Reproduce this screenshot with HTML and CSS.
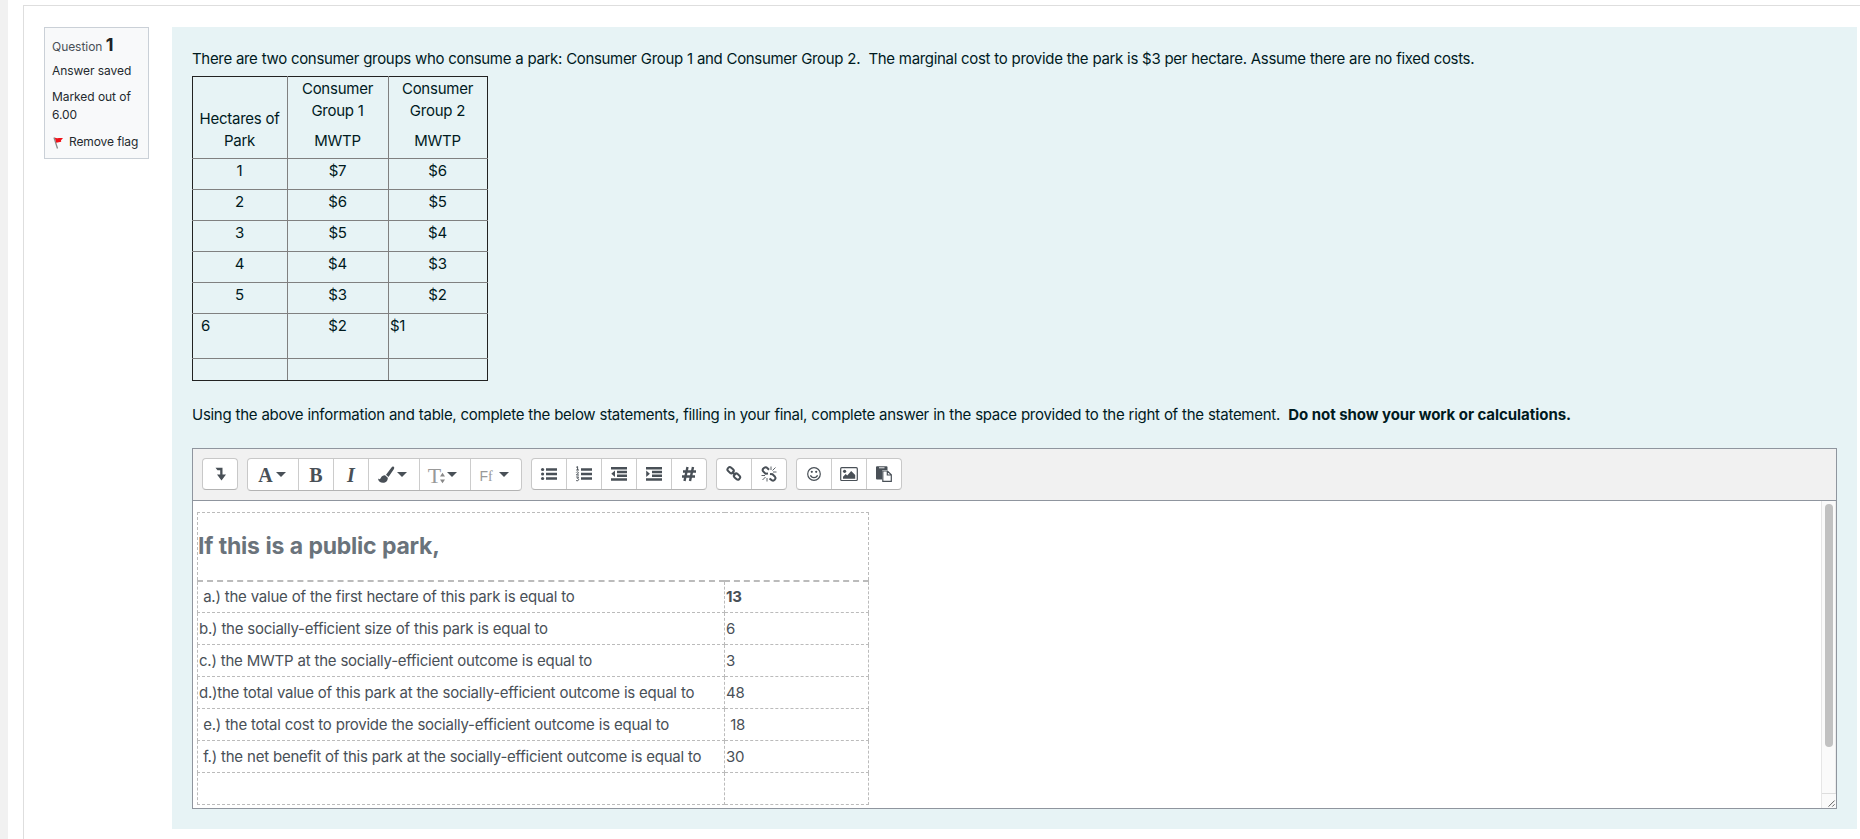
FILE: index.html
```html
<!DOCTYPE html>
<html lang="en">
<head>
<meta charset="utf-8">
<title>Quiz question 1</title>
<link rel="stylesheet" href="styles.css">
</head>
<body>
<div class="page">
  <main class="region">
    <aside class="info">
      <h3 class="qno">Question <b>1</b></h3>
      <div class="state">Answer saved</div>
      <div class="grade">Marked out of 6.00</div>
      <div class="flag"><svg width="11" height="12" viewBox="0 0 11 12"><path d="M1 .5L4.500 11.500" stroke="#888" stroke-width="1.300"/><path d="M1.700.5C4 2 7 .3 10 1.200L8 3.200 8.200 4.800 3.300 5.800Z" fill="#f01018"/></svg><span>Remove flag</span></div>
    </aside>
    <section class="formulation">
      <p class="intro">There are two consumer groups who consume a park: Consumer Group 1 and Consumer Group 2.&nbsp; The marginal cost to provide the park is $3 per hectare. Assume there are no fixed costs.</p>
      <table class="mwtp">
        <colgroup><col class="c1"><col class="c2"><col class="c3"></colgroup>
        <tr class="head"><td>Hectares of Park</td><td><p>Consumer Group 1</p><p>MWTP</p></td><td><p>Consumer Group 2</p><p>MWTP</p></td></tr>
        <tr><td>1</td><td>$7</td><td>$6</td></tr>
        <tr><td>2</td><td>$6</td><td>$5</td></tr>
        <tr><td>3</td><td>$5</td><td>$4</td></tr>
        <tr><td>4</td><td>$4</td><td>$3</td></tr>
        <tr><td>5</td><td>$3</td><td>$2</td></tr>
        <tr class="six"><td>6</td><td>$2</td><td>$1</td></tr>
        <tr class="blank"><td></td><td></td><td></td></tr>
      </table>
      <p class="task"><span class="lead">Using the above information and table, complete the below statements, filling in your final, complete answer in the space provided to the right of the statement.&nbsp; </span><b>Do not show your work or calculations.</b></p>

      <div class="editor">
        <div class="toolbar">
          <div class="group"><button><svg class="ic" viewBox="0 0 20 20"><path d="M5.500 3.700H12.500V10.500H16L11.500 16.500 7 10.500H10.200V6.200H7.500Z"/></svg></button></div>
          <div class="group tall">
            <button class="wide"><span class="glyph">A</span><i class="caret"></i></button>
            <button><span class="glyph">B</span></button>
            <button><span class="glyph ital">I</span></button>
            <button class="wide"><svg class="ic brush" viewBox="0 0 18 18"><path d="M16.700.8c.8.5.6 1.600.1 2.400L11.500 11 9 8.700 14.500 1.400c.6-.7 1.400-1 2.200-.6ZM8.300 9.400l2.500 2.400c.2 3-2 5-4.800 5-2.700 0-4.600-1.300-5-4.300 1.500 1 2.200.8 2.800-.5.800-1.800 2.500-2.800 4.500-2.600Z"/></svg><i class="caret near"></i></button>
            <button class="wide"><span class="glyph size">T</span><svg class="updown" viewBox="0 0 5 12"><path d="M0 4.500L2.500.8 5 4.500ZM0 7.500H5L2.500 11.200Z"/></svg><i class="caret mid"></i></button>
            <button class="wide"><span class="family">F<em>f</em></span><i class="caret far"></i></button>
          </div>
          <div class="group">
            <button><svg class="ic" viewBox="0 0 20 20"><path d="M7 5.500H18M7 10H18M7 14.500H18" class="bar"/><circle cx="3.600" cy="5.500" r="1.600"/><circle cx="3.600" cy="10" r="1.600"/><circle cx="3.600" cy="14.500" r="1.600"/></svg></button>
            <button><svg class="ic" viewBox="0 0 20 20"><path d="M7 5.500H18M7 10H18M7 14.500H18" class="bar"/><path class="thin" d="M2.200 3.300L3.600 2.600V6M2.200 6H5M2.300 8.500C3 7.400 4.800 7.800 4.300 9L2.400 11H5M2.200 13H4.600L3.400 14.400C5.500 14.500 5 17.500 2.200 16.600"/></svg></button>
            <button><svg class="ic" viewBox="0 0 20 20"><path class="bar" d="M2 4.200H18M8 8H18M8 11.800H18M2 15.600H18"/><path d="M6 6.500V13L2.300 9.700Z"/></svg></button>
            <button><svg class="ic" viewBox="0 0 20 20"><path class="bar" d="M2 4.200H18M8 8H18M8 11.800H18M2 15.600H18"/><path d="M2.200 6.500V13L5.900 9.700Z"/></svg></button>
            <button><svg class="ic" viewBox="0 0 20 20"><path class="hash" d="M8.500 3L5.500 17M14 3L11 17M4 7.500H17M3 12.500H16"/></svg></button>
          </div>
          <div class="group">
            <button><svg class="ic" viewBox="0 0 20 20"><g class="link"><rect x="-3.300" y="-2.300" width="6.600" height="4.600" rx="2.100" transform="translate(6.600 6.200) rotate(42)"/><rect x="-3.300" y="-2.300" width="6.600" height="4.600" rx="2.100" transform="translate(13 12.600) rotate(42)"/><path d="M8 7.600L11.600 11.200"/></g></svg></button>
            <button><svg class="ic" viewBox="0 0 20 20"><g class="link"><path d="M10 5.800L8 3.800C6.500 2.200 2.500 5 4 7.200L6.500 9.800 9 9.500M10.500 14.500L13 16.400C15 17.500 17.500 14.500 16 12.800L13.500 10.300 11 10"/></g><path class="rays" d="M12 6V2.500M13.500 6.500L16.500 3.500M14 8H17.500M8 14V17.500M6.500 13L3.500 16M6 11.500H2.500"/></svg></button>
          </div>
          <div class="group">
            <button><svg class="ic" viewBox="0 0 20 20"><circle class="ring" cx="10" cy="10" r="6.300"/><circle cx="7.800" cy="7.800" r="1.100"/><circle cx="12.200" cy="7.800" r="1.100"/><path class="ring" d="M6.500 11.300C7.500 14.400 12.500 14.400 13.500 11.300"/></svg></button>
            <button><svg class="ic" viewBox="0 0 20 20"><rect class="ring" x="1.700" y="3.700" width="16.600" height="12.800" rx="1"/><circle cx="5.600" cy="7.300" r="1.600"/><path d="M4 14.800V12.800L6.700 10.100 8.200 11.500 12.200 7 16.200 11V14.800Z"/></svg></button>
            <button><svg class="ic" viewBox="0 0 20 20"><path d="M2 3.300Q2 2.300 3 2.300H12.500Q13.500 2.300 13.500 3.300V6H9.300Q8 6 8 7.300V15.500H3Q2 15.500 2 14.500Z"/><path d="M5 3.800H10.500" stroke="#fff" stroke-width=".9"/><path class="ring" fill="#fff" d="M8.800 7H13.500L17.300 10.800V17.300H8.800ZM13.300 7V11H17.300"/></svg></button>
          </div>
        </div>
        <div class="content">
          <div class="doc">
            <table class="answers">
              <colgroup><col class="stmt"><col class="val"></colgroup>
              <tr class="title"><td colspan="2"><h3>If this is a public park,</h3></td></tr>
              <tr><td>&nbsp;a.) the value of the first hectare of this park is equal to</td><td><b>13</b></td></tr>
              <tr><td>b.) the socially-efficient size of this park is equal to</td><td>6</td></tr>
              <tr><td>c.) the MWTP at the socially-efficient outcome is equal to</td><td>3</td></tr>
              <tr><td>d.)the total value of this park at the socially-efficient outcome is equal to</td><td>48</td></tr>
              <tr><td>&nbsp;e.) the total cost to provide the socially-efficient outcome is equal to</td><td>&nbsp;18</td></tr>
              <tr><td>&nbsp;f.) the net benefit of this park at the socially-efficient outcome is equal to</td><td>30</td></tr>
              <tr><td></td><td></td></tr>
            </table>
          </div>
          <div class="scroll"><div class="track"><div class="thumb"></div></div><svg class="grip" viewBox="0 0 15 15"><path d="M7 13.500L13.500 7M11 13.500L13.500 11"/></svg></div>
        </div>
      </div>
    </section>
  </main>
</div>
</body>
</html>
```
FILE: styles.css
```css
* { box-sizing: border-box; }
body { margin: 0; background: #fff; font: 15px/22px Inter, "Liberation Sans", sans-serif; color: #001a1e; }
p, h3 { margin: 0; }
.page { height: 839px; overflow: hidden; border-left: 8px solid #f1f1f1; padding: 5px 0 0 15px; }
.region { height: 860px; border: solid #dedede; border-width: 1px 0 0 1px; padding: 21px 3px 0 20px; display: flex; align-items: flex-start; gap: 23px; }

.info { width: 105px; height: 132px; flex: none; border: 1px solid #cad0d7; background: #f8f9fa; padding: 7px 0 0 7px; font-size: 12px; line-height: 18px; letter-spacing: -.06px; color: #24292e; white-space: nowrap; }
.qno { font-size: 12px; font-weight: 400; line-height: 20px; letter-spacing: -.05px; color: #495057; }
.qno b { font-size: 18px; color: #1d2125; }
.state { margin-top: 5px; }
.grade { margin-top: 8px; width: 82px; white-space: normal; }
.flag { display: flex; gap: 5px; align-items: center; margin-top: 9px; }
.flag svg { fill: none; margin: 2px 0 0 1px; }
.flag span { letter-spacing: -.1px; }

.formulation { flex: 1; height: 802px; background: #e7f3f5; padding: 20px 20px 0; }
.intro { margin-top: 1px; white-space: nowrap; letter-spacing: -.327px; word-spacing: .25px; }
.mwtp { margin-top: 6px; width: 295px; table-layout: fixed; border-collapse: collapse; border: 1px solid #222; text-align: center; letter-spacing: -.25px; }
.mwtp .c1 { width: 95px; }
.mwtp .c2 { width: 101px; }
.mwtp .c3 { width: 99px; }
.mwtp td { height: 31px; padding: 1px 3px 0 2px; vertical-align: top; border: 1px solid #808080; }
.mwtp tr:first-child td { border-top-color: #222; }
.mwtp tr:last-child td { border-bottom-color: #222; }
.mwtp td:first-child { border-left-color: #222; }
.mwtp td:last-child { border-right-color: #222; }
.mwtp .head td { height: 82px; padding: 1px 7px 0 6px; }
.mwtp .head td:first-child { padding: 31px 5px 0 4px; }
.mwtp .head p + p { margin-top: 8px; }
.mwtp .six td { height: 45px; }
.mwtp .six td:first-child { text-align: left; padding-left: 8px; }
.mwtp .six td:last-child { text-align: left; padding-left: 1px; }
.mwtp .blank td { height: 22px; padding: 0; }
.task { margin-top: 23px; white-space: nowrap; }
.lead { letter-spacing: -.28px; word-spacing: .25px; }
.task b { letter-spacing: -.05px; }

.editor { margin-top: 22px; height: 361px; width: 1645px; border: 1px solid #8f959e; display: flex; flex-direction: column; }
.toolbar { height: 52px; flex: none; border-bottom: 1px solid #8f959e; background: #f1f1f1; padding: 9px; display: flex; align-items: flex-start; gap: 9px; }
.group { display: flex; height: 32px; border: 1px solid #c8c8c8; border-bottom-color: #b3b3b3; border-radius: 4px; background: #fff; overflow: hidden; }
.group.tall { height: 33px; }
.group button { width: 35px; border: 0; border-left: 1px solid #ccc; background: none; padding: 0; display: flex; align-items: center; justify-content: center; color: #495057; }
.group button:first-child { width: 34px; border-left: 0; }
.group .wide { width: 51px; }
.group .wide:first-child { width: 50px; }
.ic { width: 20px; height: 20px; fill: #495057; }
.brush { width: 18px; height: 18px; }
.bar { stroke: #495057; stroke-width: 2.500; }
.thin { fill: none; stroke: #495057; stroke-width: 1; }
.hash { fill: none; stroke: #495057; stroke-width: 2.400; }
.link { fill: none; stroke: #495057; stroke-width: 2; }
.rays { fill: none; stroke: #495057; stroke-width: .9; }
.ring { stroke: #495057; stroke-width: 1.200; }
circle.ring, rect.ring, path.ring:not([fill]) { fill: none; }
.glyph { font: bold 20px/24px "Liberation Serif", serif; }
.ital { font-style: italic; }
.caret { border: 5px solid transparent; border-top: 5px solid #495057; border-bottom: 0; margin: 0 2px 0 3px; }
.near { margin: 0 5px 0 2px; }
.size { font-weight: 400; font-size: 22px; color: #999; padding-top: 3px; }
.updown { width: 5px; height: 12px; fill: #888; margin: 7px -1px 0 -1px; }
.mid { margin: 0 5px 0 3px; }
.family { font: 14px/18px "Liberation Sans", sans-serif; color: #999; padding-top: 4px; }
.family em { font-family: "Liberation Serif", serif; font-size: 14px; font-style: normal; }
.far { margin: 0 4px 0 6px; }

.content { flex: 1; min-height: 0; display: flex; background: #fff; }
.doc { flex: 1; padding: 11px 4px 0; color: #495057; }
.answers { width: 671px; table-layout: fixed; border-collapse: collapse; letter-spacing: -.25px; word-spacing: .2px; }
.stmt { width: 527px; }
.val { width: 144px; }
.answers td { height: 32px; padding: 0 1px; border: 1px dashed #bbb; white-space: nowrap; }
.answers .title td { height: 68px; border-bottom-width: 2px; padding: 0; }
.answers h3 { font-size: 23px; line-height: 28px; color: #6a737b; letter-spacing: -.25px; word-spacing: .5px; }
.scroll { width: 15px; border-left: 1px solid #e6e6e6; background: #fafafa; display: flex; flex-direction: column; }
.track { flex: 1; border-right: 1px solid #ececec; padding: 3px 2px 0 3px; }
.thumb { width: 8px; height: 243px; border-radius: 4px; background: #c1c1c1; }
.grip { width: 14px; height: 15px; border-top: 1px solid #ddd; fill: none; stroke: #555; stroke-width: 1; }
```
